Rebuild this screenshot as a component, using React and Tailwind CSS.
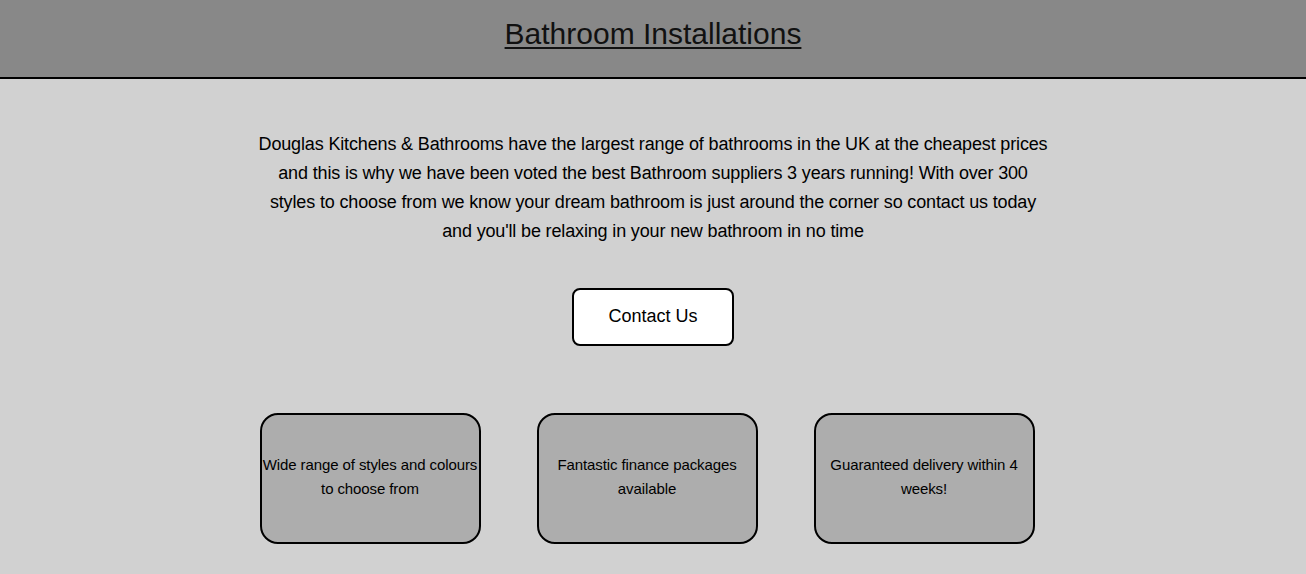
export default function App() {
  const cards = [
    "Wide range of styles and colours to choose from",
    "Fantastic finance packages available",
    "Guaranteed delivery within 4 weeks!",
  ];
  return (
    <div className="min-h-[574px] bg-[#d1d1d1] text-black" style={{ fontFamily: '"Liberation Sans", sans-serif' }}>
      <header className="h-[79px] bg-[#888888] border-b-2 border-black flex justify-center">
        <h1 className="mt-[15px] text-[30px] leading-[38px] underline underline-offset-[3px] decoration-2 text-[#111]">
          Bathroom Installations
        </h1>
      </header>
      <div className="flex flex-col items-center">
        <p className="mt-[51px] w-[820px] text-center text-[18px] leading-[29px] tracking-[-0.15px]">
          Douglas Kitchens &amp; Bathrooms have the largest range of bathrooms in the UK at the cheapest prices
          <br />
          and this is why we have been voted the best Bathroom suppliers 3 years running! With over 300
          <br />
          styles to choose from we know your dream bathroom is just around the corner so contact us today
          <br />
          and you'll be relaxing in your new bathroom in no time
        </p>
        <button className="mt-[42px] w-[162px] h-[58px] bg-white border-2 border-black rounded-[8px] text-[18px] pb-[2px]">
          Contact Us
        </button>
        <div className="mt-[67px] mr-[12px] flex gap-[56px]">
          {cards.map((c) => (
            <div key={c} className="w-[221px] h-[131px] bg-[#adadad] border-2 border-black rounded-[18px] flex items-center justify-center text-center text-[15px] leading-[24px] tracking-[-0.1px] pb-[4px] px-[1px]">
              {c}
            </div>
          ))}
        </div>
      </div>
    </div>
  );
}
